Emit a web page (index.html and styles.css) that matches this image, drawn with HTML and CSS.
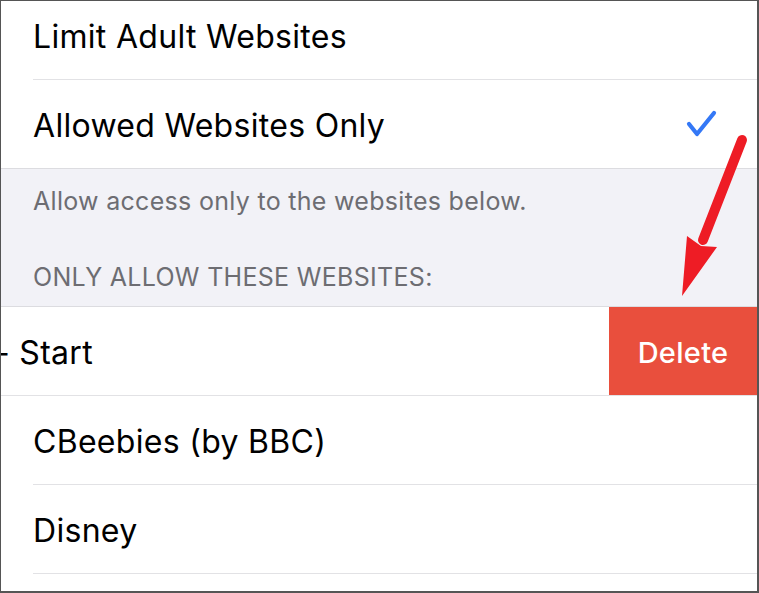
FILE: index.html
```html
<!DOCTYPE html>
<html lang="en">
<head>
<meta charset="utf-8">
<title>Allowed Websites</title>
<link rel="stylesheet" href="styles.css">
</head>
<body>
<div class="screen">
  <ul class="group group-top">
    <li class="row"><div class="cell"><span class="label">Limit Adult Websites</span></div></li>
    <li class="row last"><div class="cell"><span class="label">Allowed Websites Only</span>
      <svg class="check" width="36" height="30" viewBox="0 0 36 30"><path d="M4 14 L12 24 L29 3" fill="none" stroke="#3478f6" stroke-width="4.2" stroke-linecap="round" stroke-linejoin="round"/></svg>
    </div></li>
  </ul>
  <div class="gray">
    <p class="footer">Allow access only to the websites below.</p>
    <p class="header">ONLY ALLOW THESE WEBSITES:</p>
  </div>
  <ul class="group group-sites">
    <li class="row swiped">
      <div class="swipe-content"><span class="label">- Start</span></div>
      <div class="delete">Delete</div>
    </li>
    <li class="row"><div class="cell"><span class="label">CBeebies (by BBC)</span></div></li>
    <li class="row"><div class="cell"><span class="label">Disney</span></div></li>
  </ul>
  <svg class="arrow" width="759" height="593" viewBox="0 0 759 593">
    <line x1="742" y1="140" x2="703" y2="240" stroke="#ee1c25" stroke-width="10" stroke-linecap="round"/>
    <polygon points="682,296 687,236 701,246 717,247" fill="#ee1c25"/>
  </svg>
</div>
</body>
</html>
```
FILE: styles.css
```css
* { box-sizing: border-box; }
html, body { margin: 0; padding: 0; background: #fff; }
.screen {
  position: relative;
  width: 759px;
  height: 593px;
  overflow: hidden;
  background: #fff;
  border-style: solid;
  border-color: #555;
  border-width: 1px 2px 2px 1px;
  font-family: Inter, "Noto Sans", "Liberation Sans", sans-serif;
}
.group { list-style: none; margin: 0; padding: 0; background: #fff; }
.group-top { margin-top: -10px; border-bottom: 1px solid #dcdce0; }
.group-sites { border-top: 1px solid #dcdce0; }
.row { height: 89px; display: flex; }
.cell {
  flex: 1;
  display: flex;
  align-items: center;
  justify-content: space-between;
  margin-left: 32px;
  padding-top: 2px;
  padding-left: 0;
  padding-right: 36px;
  border-bottom: 1px solid #e2e2e5;
}
.row.last { height: 88px; }
.row.last .cell { border-bottom: none; }
.label { font-size: 32px; color: #000; letter-spacing: 0.3px; }
.check { display: block; margin-top: 0; }
.gray {
  background: #f2f2f7;
  height: 137px;
  padding: 17px 0 0 32px;
  color: #6d6d72;
  font-size: 25px;
  letter-spacing: 0.3px;
}
.gray p { margin: 0; line-height: 30px; }
.gray .header { margin-top: 46px; }
.swiped { border-bottom: 1px solid #e2e2e5; }
.swipe-content {
  flex: 1;
  display: flex;
  align-items: center;
  padding-top: 2px;
  margin-left: -6px;
}
.delete {
  width: 148px;
  background: #e94f3d;
  color: #fff;
  font-size: 29px;
  font-weight: 500;
  letter-spacing: 0.3px;
  display: flex;
  align-items: center;
  justify-content: center;
  padding-top: 2px;
}
.arrow { position: absolute; left: -1px; top: -1px; pointer-events: none; }
```
